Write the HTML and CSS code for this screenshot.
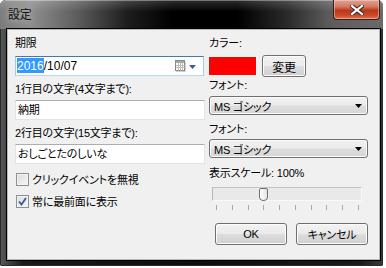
FILE: index.html
```html
<!DOCTYPE html>
<html lang="ja">
<head>
  <meta charset="UTF-8">
  <title>設定</title>
  <link rel="stylesheet" href="styles.css">
</head>
<body>
  <!-- Dialog window -->
  <div class="window">
    <div class="titlebar">
      <span class="title">設定</span>
      <button class="close-btn" aria-label="閉じる">
        <svg width="14" height="10" viewBox="0 0 14 10">
          <path d="M2 1 L12 9 M12 1 L2 9" stroke="#3a2a28" stroke-width="4.2" stroke-linecap="square" fill="none"/>
          <path d="M2 1 L12 9 M12 1 L2 9" stroke="#fff" stroke-width="2.2" stroke-linecap="square" fill="none"/>
        </svg>
      </button>
    </div>

    <div class="client">
      <!-- Left column -->
      <div class="col col-left">
        <div class="label">期限</div>
        <div class="field date-field">
          <span class="text"><span class="selected">2016</span>/10/07</span>
          <span class="date-drop">
            <svg width="11" height="12" viewBox="0 0 11 12">
              <rect x="0.5" y="0.5" width="9" height="10" fill="#fff" stroke="#8a8a8a"/>
              <rect x="1" y="1" width="8" height="2" fill="#a8a8a8"/>
              <path d="M1 5.5 H9.5 M1 7.5 H9.5 M3.5 3 V10.5 M5.5 3 V10.5 M7.5 3 V10.5" stroke="#bdbdbd" stroke-width="1"/>
              <path d="M10.5 2 V11.5 H1" stroke="#cfcfcf" fill="none"/>
            </svg>
            <svg class="drop-arrow" width="7" height="4" viewBox="0 0 7 4"><path d="M0 0 H7 L3.5 4 Z" fill="#3e5d8a"/></svg>
          </span>
        </div>
        <div class="label">1行目の文字(4文字まで):</div>
        <div class="field">納期</div>
        <div class="label">2行目の文字(15文字まで):</div>
        <div class="field">おしごとたのしいな</div>
        <div class="check check-first">
          <span class="box"></span>
          <span>クリックイベントを無視</span>
        </div>
        <div class="check">
          <span class="box">
            <svg width="9" height="9" viewBox="0 0 9 9"><path d="M1 4.5 L3.5 7.5 L8 1" stroke="#3b5a96" stroke-width="1.8" fill="none"/></svg>
          </span>
          <span>常に最前面に表示</span>
        </div>
      </div>

      <!-- Right column -->
      <div class="col col-right">
        <div class="label">カラー:</div>
        <div class="color-row">
          <span class="swatch"></span>
          <button class="btn btn-small">変更</button>
        </div>
        <div class="label">フォント:</div>
        <div class="combo">
          <span>MS ゴシック</span>
          <svg width="7" height="4" viewBox="0 0 7 4"><path d="M0 0 H7 L3.5 4 Z" fill="#000"/></svg>
        </div>
        <div class="label label-font2">フォント:</div>
        <div class="combo combo-second">
          <span>MS ゴシック</span>
          <svg width="7" height="4" viewBox="0 0 7 4"><path d="M0 0 H7 L3.5 4 Z" fill="#000"/></svg>
        </div>
        <div class="label label-scale">表示スケール: 100%</div>
        <div class="slider">
          <span class="thumb"></span>
        </div>
        <div class="ticks">
          <span></span><span></span><span></span><span></span><span></span>
          <span></span><span></span><span></span><span></span><span></span>
        </div>
        <div class="actions">
          <button class="btn">OK</button>
          <button class="btn">キャンセル</button>
        </div>
      </div>
    </div>
  </div>
</body>
</html>
```

FILE: styles.css
```css
/* General */
body {
  margin: 0;
  background: #fff;
  font-family: "Liberation Sans", "Noto Sans CJK JP", sans-serif;
  font-size: 11px;
  font-feature-settings: "palt";
  letter-spacing: -0.2px;
  color: #000;
}

button {
  font-family: inherit;
  font-size: 11px;
  font-feature-settings: "palt";
  letter-spacing: -0.2px;
  color: #000;
  padding: 0;
}

/* Window frame */
.window {
  width: 383px;
  height: 266px;
  display: flex;
  flex-direction: column;
  border-radius: 6px 6px 2px 2px;
  background: linear-gradient(to right, #5a5a5a 0%, #1a1a1a 6%, #0c0c0c 50%, #1a1a1a 94%, #3a3a3a 100%);
  box-shadow: inset 0 0 0 1px #2a2a2a;
}

.titlebar {
  height: 29px;
  display: flex;
  justify-content: space-between;
  align-items: flex-start;
  border-radius: 6px 6px 0 0;
  background:
    linear-gradient(to bottom, rgba(255, 255, 255, 0.18), rgba(255, 255, 255, 0) 40%),
    linear-gradient(to right, #7c7c7c 0%, #8e8e8e 8%, #5e5e5e 20%, #1e1e1e 33%, #000 45%, #000 62%, #2a2a2a 75%, #5c5c5c 86%, #6a6a6a 100%);
  box-shadow: inset 0 1px 0 rgba(255, 255, 255, 0.35);
}

.title {
  margin: 9px 0 0 8px;
  line-height: 12px;
  font-size: 12px;
  color: #111;
  text-shadow: 0 0 6px rgba(200, 200, 200, 0.9), 0 0 10px rgba(170, 170, 170, 0.8);
}

.close-btn {
  width: 47px;
  height: 20px;
  margin-right: 3px;
  display: flex;
  align-items: center;
  justify-content: center;
  border: 1px solid #3b1f1a;
  border-top: none;
  border-radius: 0 0 4px 4px;
  background: linear-gradient(to bottom, #e0a393 0%, #d27a62 35%, #bd3519 55%, #c9482a 80%, #e27350 100%);
  box-shadow: inset 0 0 0 1px rgba(255, 220, 210, 0.45);
}

/* Client area */
.client {
  flex: 1;
  margin: 0 3px 6px 7px;
  padding: 5px 9px 0 7px;
  display: flex;
  gap: 4px;
  background: #f0f0f0;
  border: 1px solid #b8b8b8;
  box-shadow: 0 0 0 1px #000;
}

.col {
  display: flex;
  flex-direction: column;
}

.col-left {
  width: 190px;
}

.col-right {
  width: 160px;
}

.label {
  height: 16px;
  line-height: 16px;
  white-space: nowrap;
}

/* Text fields */
.field {
  height: 20px;
  box-sizing: border-box;
  margin: 3px 0 4px;
  padding-left: 2px;
  line-height: 18px;
  background: #fff;
  border: 1px solid #e2e3ea;
  border-top-color: #abadb3;
  white-space: nowrap;
}

.date-field {
  margin: 5px 1px 4px 0;
  padding-left: 1px;
  display: flex;
  justify-content: space-between;
  align-items: center;
  font-size: 12px;
  letter-spacing: 0;
  border-color: #a4c9e3;
  border-top-color: #3d7bad;
  border-bottom-color: #b7d9ed;
}

.selected {
  background: #3399ff;
  color: #fff;
  padding: 1px 0 0;
}

.date-drop {
  display: flex;
  align-items: center;
  gap: 3px;
  margin-right: 7px;
}

.drop-arrow {
  margin-top: 1px;
}

.field + .label {
  margin-top: 1px;
}

/* Checkboxes */
.check {
  height: 16px;
  display: flex;
  align-items: center;
  gap: 3px;
  margin-top: 6px;
  padding-left: 1px;
  white-space: nowrap;
}

.check-first {
  margin-top: 3px;
}

.box {
  width: 13px;
  height: 13px;
  box-sizing: border-box;
  display: flex;
  align-items: center;
  justify-content: center;
  border: 1px solid #8e8f8f;
  background: linear-gradient(135deg, #dcdcdc, #f6f6f6);
  box-shadow: inset 0 0 0 1px #f4f4f4;
}

/* Colour picker */
.color-row {
  height: 22px;
  margin-top: 4px;
  display: flex;
  align-items: center;
  gap: 6px;
}

.swatch {
  width: 47px;
  height: 18px;
  background: #ff0000;
  outline: 1px solid #f8f8f8;
}

/* Buttons */
.btn {
  height: 22px;
  border: 1px solid #707070;
  border-radius: 3px;
  background: linear-gradient(to bottom, #f2f2f2 0%, #ebebeb 48%, #dddddd 52%, #cfcfcf 100%);
  box-shadow: inset 0 0 0 1px #fcfcfc;
}

.btn-small {
  width: 44px;
  font-size: 12px;
}

/* Combo boxes */
.combo {
  height: 19px;
  box-sizing: border-box;
  margin: 3px 1px 0 0;
  padding: 0 5px 0 4px;
  display: flex;
  justify-content: space-between;
  align-items: center;
  border: 1px solid #707070;
  border-radius: 3px;
  background: linear-gradient(to bottom, #f2f2f2 0%, #ebebeb 48%, #dddddd 52%, #d6d6d6 100%);
  box-shadow: inset 0 0 0 1px #fcfcfc;
  white-space: nowrap;
}

.label-font2 {
  margin-top: 6px;
}

.combo-second {
  margin-top: 2px;
}

.label-scale {
  margin-top: 7px;
}

/* Slider */
.slider {
  position: relative;
  height: 14px;
  box-sizing: border-box;
  margin: 6px 7px 0 3px;
  background: #e7e9ea;
  border: 1px solid #d6d6d6;
  border-left-color: #b4b4b4;
  border-top-color: #c4c4c4;
  border-right-color: #fafafa;
  border-bottom-color: #fafafa;
}

.thumb {
  position: absolute;
  left: 46px;
  top: 0;
  width: 9px;
  height: 13px;
  box-sizing: border-box;
  border: 1px solid #6f6f6f;
  border-radius: 2px 2px 4px 4px;
  background: linear-gradient(to right, #fdfdfd, #e4e4e4);
}

.ticks {
  height: 5px;
  margin: 4px 10px 0 7px;
  display: flex;
  justify-content: space-between;
}

.ticks span {
  width: 1px;
  background: #a8a8a8;
}

/* Dialog buttons */
.actions {
  margin-top: 13px;
  padding-right: 1px;
  display: flex;
  justify-content: flex-end;
  gap: 9px;
}

.actions .btn {
  width: 72px;
}
```
